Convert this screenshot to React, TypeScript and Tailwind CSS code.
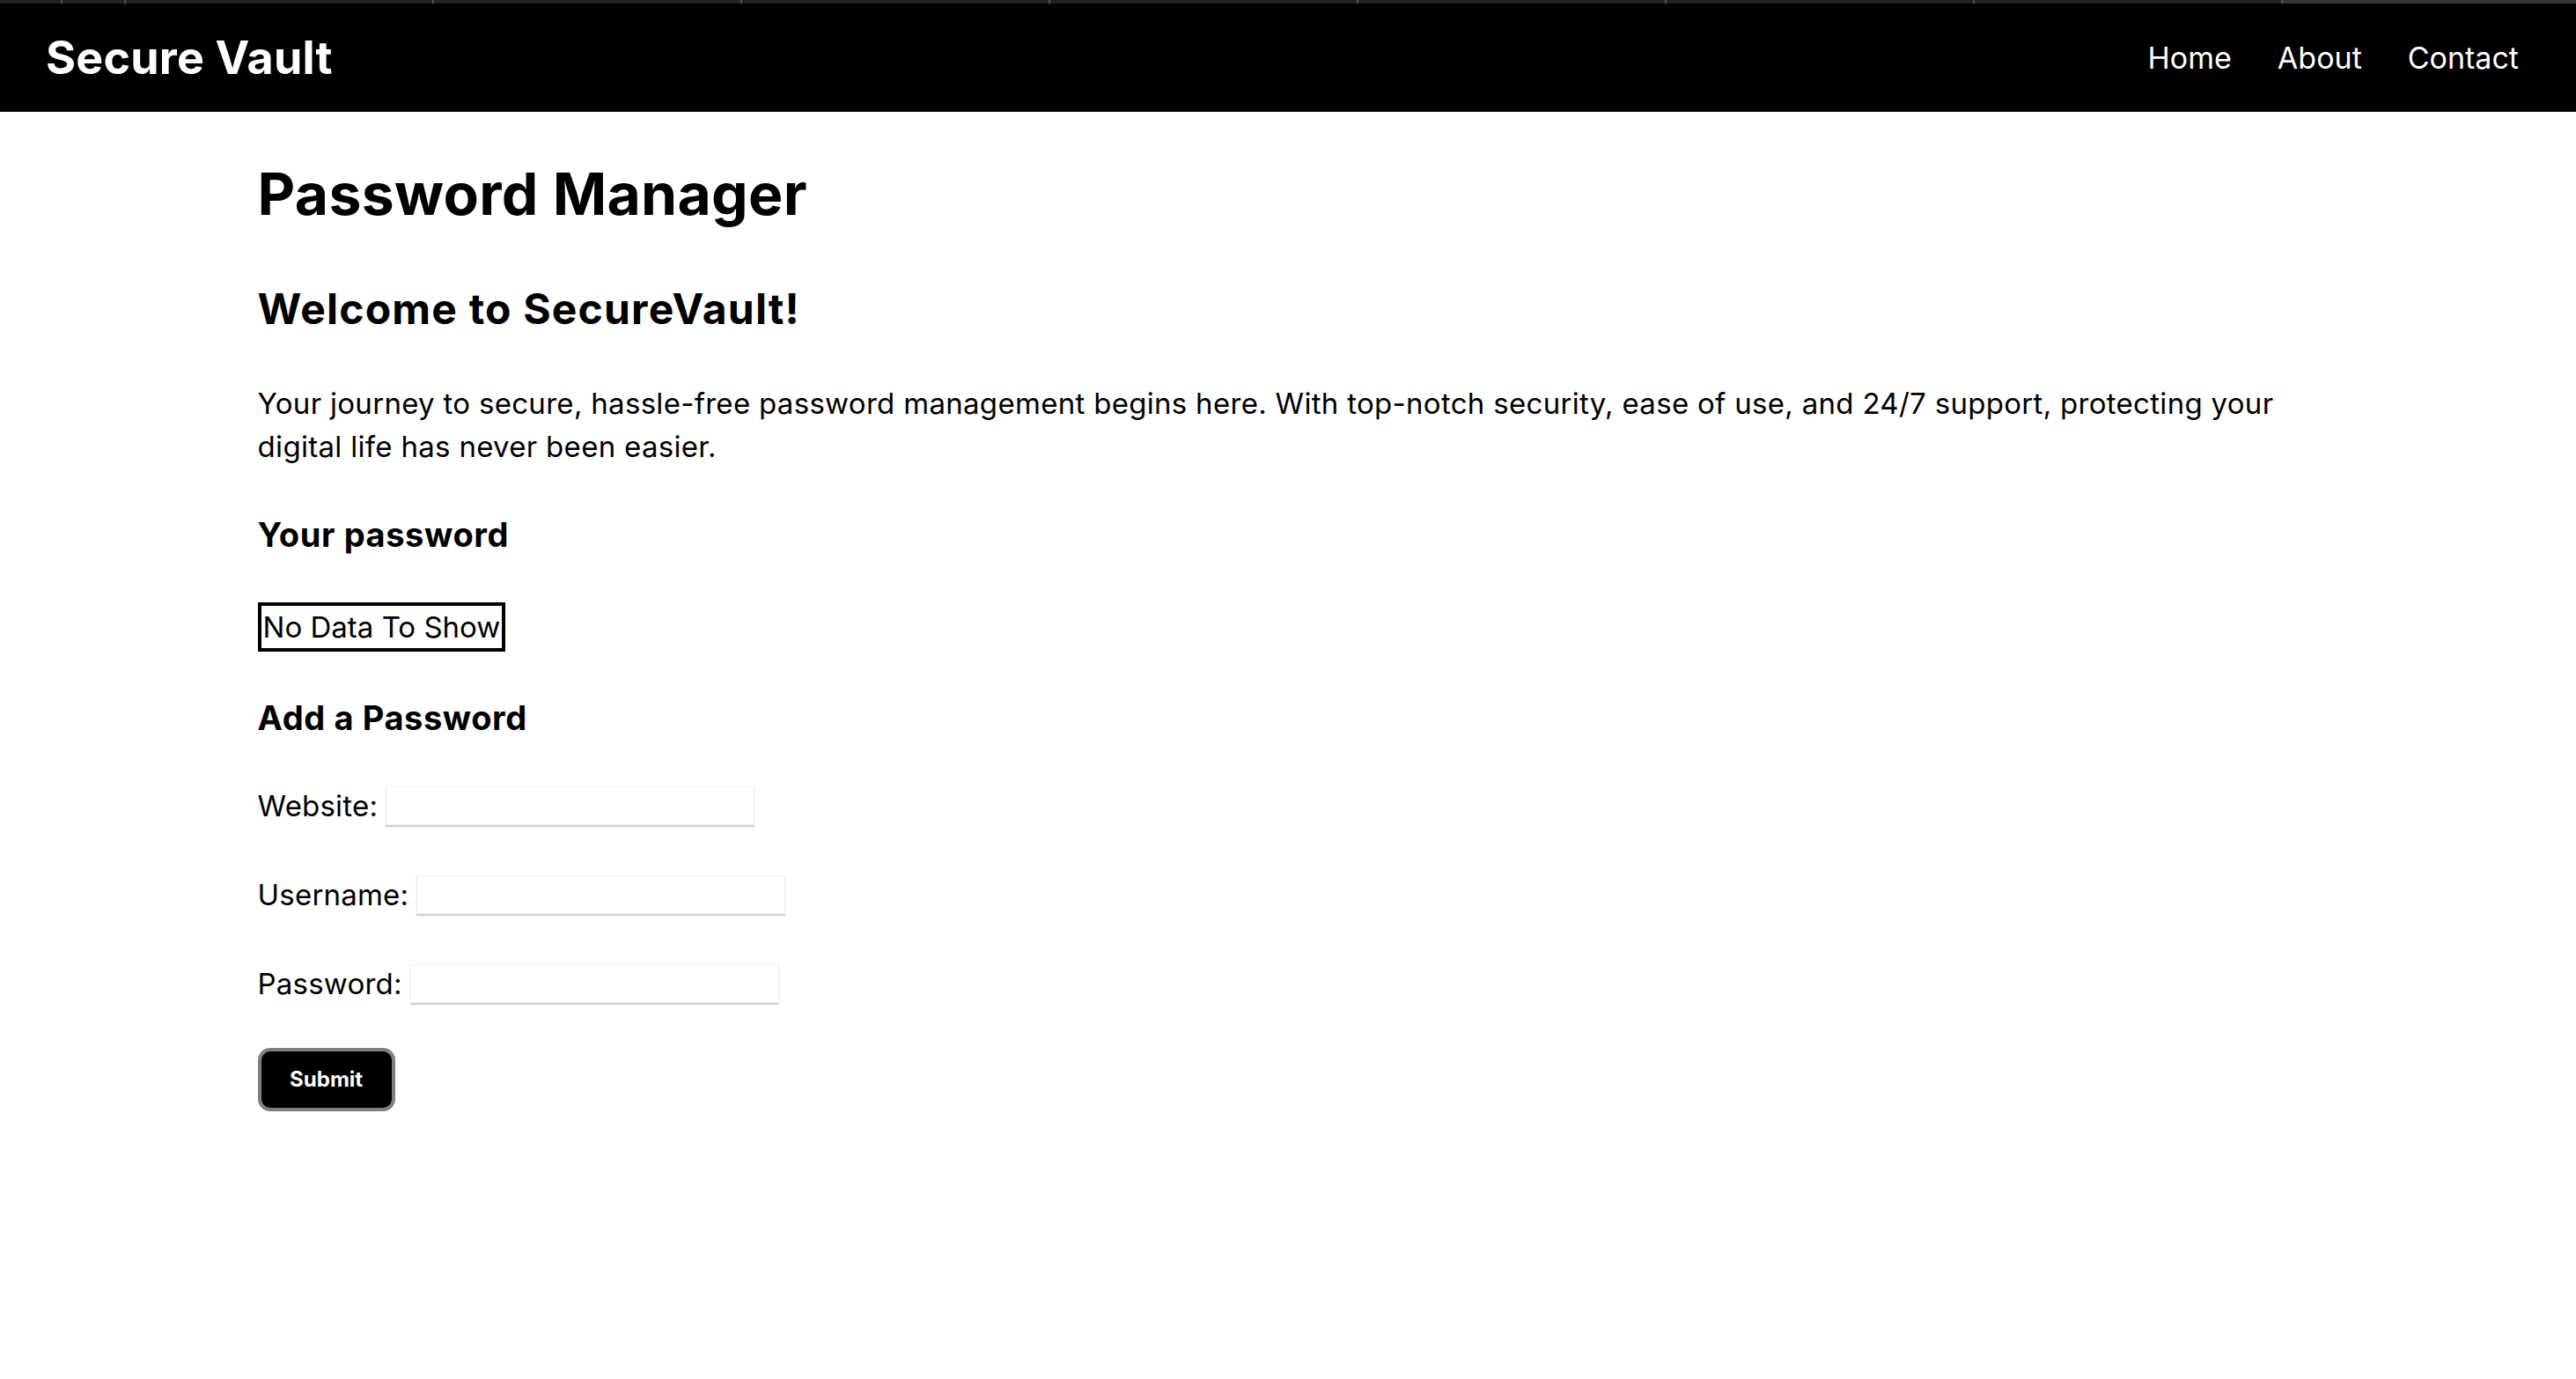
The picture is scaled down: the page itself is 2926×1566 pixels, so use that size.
const tabs = [71, 72, 350, 350, 350, 350, 350, 350, 350];

function TopStrip() {
  return (
    <div className="flex h-[4px] bg-[#232323]">
      {tabs.map((w, i) => (
        <div key={i} className="h-full border-r-2 border-[#555]" style={{ width: w }} />
      ))}
      <div className="h-full flex-1 bg-[#3b3636]" />
    </div>
  );
}

function Field({ label }: { label: string }) {
  return (
    <div className="flex items-center h-[44px] mb-[57px]">
      <label className="text-[33px] leading-none mr-[9px] tracking-[0.2px]">{label}</label>
      <input
        type="text"
        className="w-[419px] h-[44px] bg-white border border-[#eeeeee] shadow-[0_2px_1px_rgba(0,0,0,0.18)] outline-none"
      />
    </div>
  );
}

export default function App() {
  return (
    <div className="min-h-screen bg-white text-black font-['Inter','Open_Sans',sans-serif]">
      <TopStrip />
      <nav className="h-[123px] bg-black flex items-center justify-between pl-[52px] pr-[65px]">
        <span className="text-white text-[52px] font-bold tracking-[0.2px]">Secure Vault</span>
        <ul className="flex gap-[52px] text-white text-[34px]">
          <li>Home</li>
          <li>About</li>
          <li>Contact</li>
        </ul>
      </nav>

      <main className="w-[80%] mx-auto">
        <h1 className="text-[66px] font-bold leading-[90px] mt-[48px] tracking-[0.3px]">Password Manager</h1>
        <h2 className="text-[48px] font-bold leading-[70px] mt-[51px] tracking-[1.2px]">Welcome to SecureVault!</h2>
        <p className="text-[33px] leading-[49px] mt-[48px] tracking-[0.3px]">
          Your journey to secure, hassle-free password management begins here. With top-notch security,
          ease of use, and 24/7 support, protecting your digital life has never been easier.
        </p>
        <h3 className="text-[38px] font-bold leading-[56px] mt-[47px] tracking-[0.6px]">Your password</h3>

        <div className="mt-[49px] inline-block border-[4px] border-black px-[2px] text-[33px] leading-[48px]">
          No Data To Show
        </div>

        <h3 className="text-[38px] font-bold leading-[56px] mt-[47px] tracking-[0.6px]">Add a Password</h3>

        <form className="mt-[50px]" onSubmit={(e) => e.preventDefault()}>
          <Field label="Website:" />
          <Field label="Username:" />
          <Field label="Password:" />
          <button
            type="submit"
            className="mt-[-6px] w-[156px] h-[72px] rounded-[14px] bg-black border-[4px] border-[#808080] text-white text-[24px] font-bold"
          >
            Submit
          </button>
        </form>
      </main>
    </div>
  );
}
